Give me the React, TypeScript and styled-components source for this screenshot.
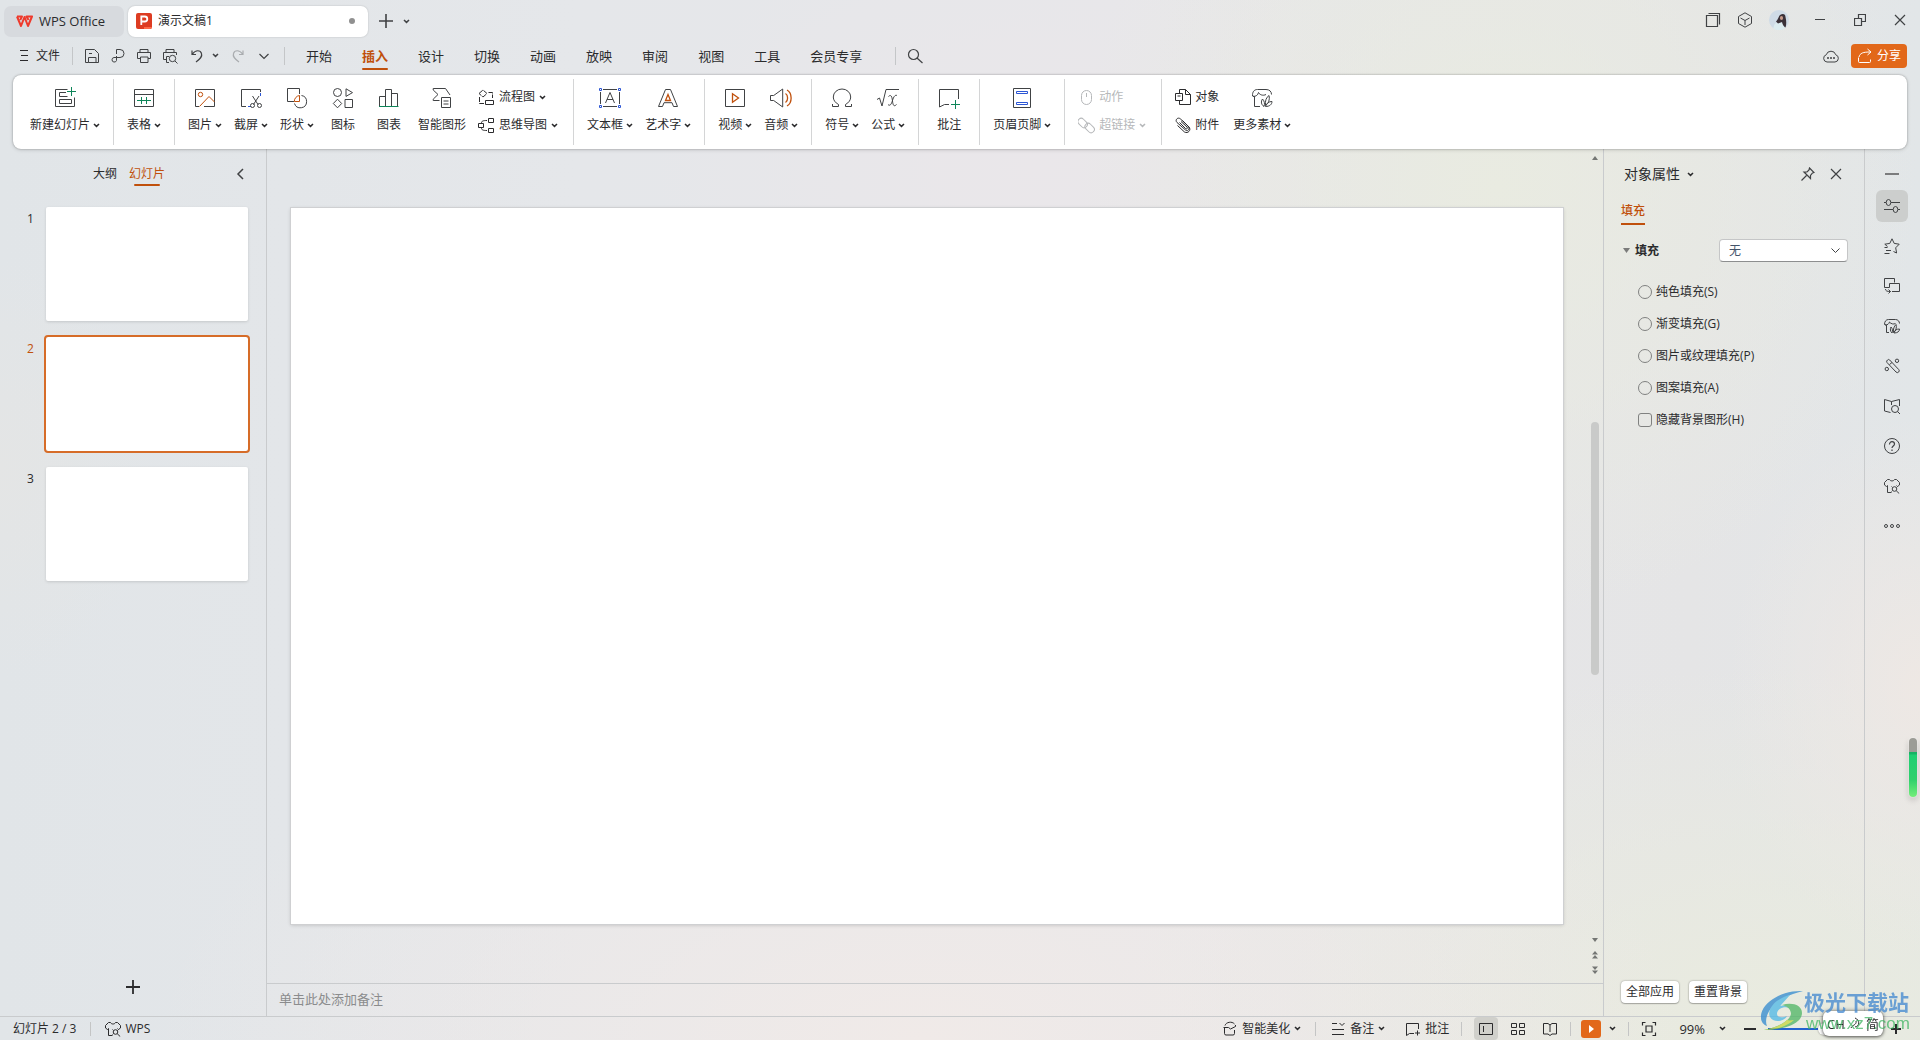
import React, { useState } from "react";
import styled, { createGlobalStyle, css } from "styled-components";

const c = {
  ink: "#2b2b2d",
  soft: "#404244",
  accent: "#c0500c",
  orange: "#e2681a",
  green: "#0e8559",
  blue: "#2b55d4",
  line: "#c9cbcd",
  rule: "#d4d5d6",
};

const Global = createGlobalStyle`
  *, *::before, *::after { box-sizing: border-box; }
  html, body { margin: 0; height: 100%; overflow: hidden; }
  body, button, input, select {
    font-family: "Open Sans", "Noto Sans CJK SC", sans-serif;
    font-size: 12px;
    line-height: 16px;
    color: ${c.ink};
  }
  h2, ol, ul { margin: 0; padding: 0; list-style: none; }
`;

/* ---------- icons ---------- */

const Glyph = styled.svg`
  display: block;
  flex: none;
  fill: none;
  stroke: currentColor;
  stroke-width: 1;
`;

type IconProps = { size?: number; children: React.ReactNode };
const Icon = ({ size = 16, children }: IconProps) => (
  <Glyph width={size} height={size} viewBox={`0 0 ${size} ${size}`} aria-hidden="true">
    {children}
  </Glyph>
);

const Chevron = () => (
  <Glyph width="7" height="5" viewBox="0 0 7 5" aria-hidden="true">
    <path d="M1 1l2.5 2.4L6 1" strokeWidth="1.5" />
  </Glyph>
);

const big: Record<string, React.ReactNode> = {
  newSlide: (
    <>
      <path d="M14.5 3.5h-12v17h19v-9" />
      <path d="M13 6.5H6.5v4h8M6.5 13.5h12v4h-12z" />
      <path d="M18.5 1v9M14 5.500h9" stroke={c.green} />
    </>
  ),
  table: (
    <>
      <path d="M2.5 3.5h19v17h-19zM2.5 8.5h19" />
      <path d="M5 14.5h14M9.5 11v7M14.5 11v7" stroke={c.green} />
    </>
  ),
  picture: (
    <>
      <path d="M6 20.5H2.5v-17h19v17H11" />
      <path d="M6.5 20.5L16 10.5l5.5 5.5" stroke={c.accent} />
      <circle cx="7.5" cy="8.5" r="2.2" stroke={c.accent} />
    </>
  ),
  screenshot: (
    <>
      <path d="M7 20.5H2.5v-17h19V6" />
      <path d="M21.5 7v3M9 20.5h3" stroke={c.blue} />
      <path d="M13.5 10l5.5 8.5M20 10l-5.500 8.5" />
      <circle cx="13.5" cy="19.5" r="2" />
      <circle cx="20.5" cy="19.5" r="2" />
    </>
  ),
  shapes: (
    <>
      <path d="M9 15.500H2.5v-13h12V8" />
      <path d="M9.500 17.500a6.200 6.200 0 1 0 7-8" />
      <path d="M14.5 9.500v6H9.300a6 6 0 0 1 5.200-6z" stroke={c.accent} />
    </>
  ),
  iconSet: (
    <>
      <circle cx="6.500" cy="6.500" r="4" />
      <path d="M15 2.800l6.500 3.800L15 10.400z" />
      <path d="M6.500 13.200l4.200 4.300-4.200 4.300-4.200-4.300z" />
      <path d="M14 13.500h7.500v8H14z" />
    </>
  ),
  chart: (
    <>
      <path d="M2.5 20v-9.500h6V20M8.500 11V3.500h6V20M14.500 7.500h6V20" />
      <path d="M2 20.500h19.500" stroke={c.green} />
    </>
  ),
  smartArt: (
    <>
      <path d="M9.500 14.500H3.200v-1.300L8 8.500 3.200 4V2.500h12.300l4.500 6.500" />
      <path d="M11.500 11.500h9v10h-9zM13.500 15h5M13.500 18h5" />
    </>
  ),
  textBox: (
    <>
      <path d="M5 3.500h14M5 20.500h14M2.500 6v12M21.500 6v12" />
      <path d="M7.500 17L12 6.500 16.500 17M9 13.500h6" />
      <path d="M1.500 2.500h2v2h-2zM20.500 2.500h2v2h-2zM1.500 19.500h2v2h-2zM20.500 19.500h2v2h-2z" stroke={c.blue} />
    </>
  ),
  wordArt: (
    <>
      <path d="M2.500 20.500L9.500 3.500h5l7 17h-4l-1.500-3.800H8L6.500 20.500z" />
      <path d="M12 8.500l-2.500 6h5z" stroke={c.accent} strokeWidth="1.300" />
    </>
  ),
  video: (
    <>
      <path d="M2.500 3.500h19v17h-19z" />
      <path d="M9.500 7.800l6 4.200-6 4.200z" stroke={c.accent} strokeWidth="1.300" />
    </>
  ),
  audio: (
    <>
      <path d="M1.500 9.500h3.200l9-6.500v18l-9-6.500H1.500z" />
      <path d="M16.500 7.500c2.800 1.500 2.800 7.500 0 9M18 4c5.500 3 5.500 13 0 16" stroke={c.accent} strokeWidth="1.300" />
    </>
  ),
  symbol: <path d="M2.500 18v2.500h6v-2C5 16.500 3.300 14 3.300 11a8.700 8 0 0 1 17.400 0c0 3-1.700 5.500-5.200 7.500v2h6V18" />,
  formula: (
    <>
      <path d="M1 13.500l2.500-1.500 2.500 8L10 3.500h13" />
      <path d="M12.500 10.500c2.500-2.500 3.500 0 4 4.500s1.500 6 4 3.500M21 9.500c-2-1-3.500 1.500-4.500 5s-2.500 6-4.500 4" />
    </>
  ),
  comment: (
    <>
      <path d="M12 18.500H7.500L2.500 21V3.500h19V13" />
      <path d="M18.500 14v9M14 18.500h9" stroke={c.green} />
    </>
  ),
  headerFooter: (
    <>
      <path d="M3.500 2.500h17v19h-17z" />
      <path d="M6.500 5.500h11v2h-11zM6.500 16.500h11v2h-11z" stroke={c.blue} />
    </>
  ),
  material: (
    <>
      <path d="M10 20.500H4.500v-10L2.500 10C2.300 6 4 3.500 7.500 3.500h8.500c3.500 0 5.500 2 5.500 5M3 10.500c3 0 5-1.500 5.500-4C10 9 13 10 16 8.500" />
      <path d="M14 20.500c-3-2-3.200-5-1.500-7.500 2 2 2.500 5 1.500 7.500zM15.500 19.500c-.5-4.500.5-8 3.500-10 1 4-.5 8-3.500 10zM15.500 20.500c1-3.500 3.500-5 6.500-5 0 3-2.500 5-6.500 5z" />
    </>
  ),
};

/* ---------- frame ---------- */

const Window = styled.div`
  display: flex;
  flex-direction: column;
  height: 100vh;
  overflow: hidden;
  background:
    radial-gradient(ellipse 40% 36% at 48% 100%, #f0eae8 0%, #f0eae800 100%),
    radial-gradient(ellipse 10% 26% at 100% 66%, #eee8e4 0%, #eee8e400 100%),
    radial-gradient(ellipse 34% 34% at 92% 98%, #e9ebdf 0%, #e9ebdf00 100%),
    radial-gradient(ellipse 22% 42% at 78% 18%, #e9ebe1 0%, #e9ebe100 100%),
    radial-gradient(ellipse 20% 24% at 54% 16%, #eae7ea 0%, #eae7ea00 100%),
    radial-gradient(ellipse 8% 20% at 0% 45%, #e4e5e5 0%, #e4e5e500 100%),
    linear-gradient(90deg, #e1e5e8 0%, #e5e7ea 30%, #e7e7ea 60%, #e5e5e6 88%, #e2e6e8 100%);
`;

const BareButton = styled.button`
  display: flex;
  align-items: center;
  justify-content: center;
  padding: 0;
  border: 0;
  background: none;
  white-space: nowrap;
  cursor: pointer;
`;

const IconButton = styled(BareButton)<{ $w?: number; $muted?: boolean }>`
  width: ${(p) => p.$w ?? 26}px;
  height: 24px;
  color: ${(p) => (p.$muted ? "#a9acaf" : c.soft)};
`;

const Spacer = styled.div`
  flex: 1;
`;

const TitleBar = styled.header`
  display: flex;
  align-items: center;
  height: 38px;
  padding: 4px 0 0 4px;
`;

const Tab = styled(BareButton)<{ $active?: boolean }>`
  justify-content: flex-start;
  gap: 6px;
  width: ${(p) => (p.$active ? 240 : 120)}px;
  height: 31px;
  margin-right: 4px;
  padding: 0 ${(p) => (p.$active ? 13 : 8)}px 0 ${(p) => (p.$active ? 8 : 12)}px;
  border-radius: 7px;
  background: ${(p) => (p.$active ? "#fff" : "#d7dade")};
  box-shadow: ${(p) => (p.$active ? "0 0 2px #0003" : "none")};
  font-size: ${(p) => (p.$active ? 12 : 13)}px;
`;

const UnsavedDot = styled.span`
  width: 6px;
  height: 6px;
  margin-left: auto;
  border-radius: 50%;
  background: #909090;
`;

const WindowButtons = styled.div`
  display: flex;
  align-items: center;
  margin-bottom: 2px;
`;

const AvatarButton = styled(BareButton)`
  margin: 0 11px 0 8px;
`;

const MenuBar = styled.nav`
  display: flex;
  align-items: center;
  height: 37px;
  padding: 0 13px 2px 16px;
`;

const FileButton = styled(BareButton)`
  gap: 6px;
  margin-right: 12px;
`;

const MenuRule = styled.span<{ $l?: number; $r?: number }>`
  width: 1px;
  height: 18px;
  margin: 0 ${(p) => p.$r ?? 6}px 0 ${(p) => p.$l ?? 0}px;
  background: #c4c6c8;
`;

const MenuTab = styled(BareButton)<{ $active?: boolean }>`
  position: relative;
  height: 28px;
  padding: 0 15px;
  font-size: 13px;
  font-weight: ${(p) => (p.$active ? 700 : 400)};
  color: ${(p) => (p.$active ? c.accent : c.ink)};
  ${(p) =>
    p.$active &&
    css`
      &::after {
        content: "";
        position: absolute;
        inset: auto 15px 0;
        height: 2px;
        border-radius: 1px;
        background: ${c.accent};
      }
    `}
`;

const ShareButton = styled(BareButton)`
  gap: 4px;
  height: 24px;
  margin-left: 8px;
  padding: 0 6px;
  border-radius: 4px;
  background: ${c.orange};
  color: #fff;
`;

/* ---------- ribbon ---------- */

const Ribbon = styled.section`
  position: relative;
  z-index: 1;
  display: flex;
  height: 74px;
  margin: 0 13px;
  padding: 4px 4px;
  border-radius: 8px;
  background: #fff;
  box-shadow: 0 0 2px #0005, 0 1px 4px #0002;
`;

const Group = styled.div`
  display: flex;
  padding: 0 7px;
  & + & {
    border-left: 1px solid ${c.rule};
  }
`;

const BigButton = styled(BareButton)`
  flex-direction: column;
  justify-content: flex-start;
  gap: 7px;
  min-width: 46px;
  padding: 7px 6px 0;
  color: ${c.soft};
`;

const Caption = styled.span`
  display: flex;
  align-items: center;
  gap: 3px;
  color: ${c.ink};
`;

const Stack = styled.div`
  display: flex;
  flex-direction: column;
  padding: 4px 8px 0 6px;
`;

const SmallButton = styled(BareButton)`
  justify-content: flex-start;
  gap: 4px;
  height: 28px;
  color: ${c.ink};
  &:disabled {
    color: #b6b8ba;
    cursor: default;
  }
`;

/* ---------- workspace ---------- */

const Workspace = styled.div`
  display: flex;
  flex: 1;
  min-height: 0;
`;

const SlidePanel = styled.aside`
  display: flex;
  flex-direction: column;
  width: 267px;
  border-right: 1px solid ${c.line};
`;

const PanelTabs = styled.div`
  display: flex;
  align-items: center;
  height: 50px;
  padding: 0 13px 0 93px;
  gap: 12px;
`;

const PanelTab = styled(BareButton)<{ $active?: boolean }>`
  position: relative;
  height: 24px;
  color: ${(p) => (p.$active ? c.accent : c.ink)};
  ${(p) =>
    p.$active &&
    css`
      &::after {
        content: "";
        position: absolute;
        inset: auto 5px 0;
        height: 2px;
        border-radius: 1px;
        background: ${c.accent};
      }
    `}
`;

const Thumbs = styled.ol`
  display: flex;
  flex-direction: column;
  flex: 1;
  gap: 12px;
  padding: 6px 16px 0 27px;
`;

const ThumbRow = styled.li<{ $active?: boolean }>`
  display: flex;
  gap: 11px;
  color: ${(p) => (p.$active ? c.accent : c.ink)};
`;

const ThumbNumber = styled.span`
  width: 6px;
  padding-top: 6px;
`;

const Thumb = styled.button<{ $active?: boolean }>`
  flex: 1;
  height: 118px;
  padding: 0;
  border: 2px solid ${(p) => (p.$active ? "#d66c28" : "transparent")};
  border-radius: 4px;
  background: #fff padding-box;
  &::before {
    content: "";
    display: block;
    height: 100%;
    border-radius: 2px;
    box-shadow: ${(p) => (p.$active ? "none" : "0 1px 3px #0002")};
  }
`;

const AddSlide = styled(BareButton)`
  height: 24px;
  margin-bottom: 17px;
`;

const Center = styled.main`
  display: flex;
  flex-direction: column;
  flex: 1;
  min-width: 0;
`;

const Stage = styled.div`
  display: flex;
  flex: 1;
  min-height: 0;
  padding-left: 24px;
`;

const SlideArea = styled.div`
  display: flex;
  flex: 1;
  align-items: center;
`;

const Slide = styled.div`
  width: 100%;
  aspect-ratio: 16 / 9;
  background: #fff;
  box-shadow: 0 0 0 1px #cfd0d2, 0 1px 4px #0003;
`;

const ScrollBar = styled.div`
  display: flex;
  flex-direction: column;
  align-items: center;
  width: 16px;
  margin-left: 24px;
  padding: 1px 0 6px;
`;

const ScrollTrack = styled.div`
  display: flex;
  flex: 1;
  align-items: center;
`;

const ScrollThumb = styled.div`
  width: 8px;
  height: 33%;
  border-radius: 4px;
  background: #c9cac9;
`;

const ScrollButton = styled(BareButton)`
  width: 16px;
  height: 15px;
  color: #747674;
`;

const Notes = styled.input`
  height: 33px;
  padding: 0 12px 3px;
  border: 0;
  border-top: 1px solid ${c.line};
  background: none;
  font-size: 13px;
  &::placeholder {
    color: #8b8c8d;
    opacity: 1;
  }
`;

const Properties = styled.aside`
  display: flex;
  flex-direction: column;
  width: 262px;
  padding: 0 16px 13px 17px;
  border: 1px solid ${c.line};
  border-width: 0 1px;
`;

const PropertyHead = styled.div`
  display: flex;
  align-items: center;
  height: 50px;
  margin-right: -2px;
`;

const PropertyTitle = styled(BareButton)`
  gap: 7px;
  padding-left: 3px;
  font-size: 14px;
`;

const PropertyTab = styled(BareButton)`
  align-self: flex-start;
  height: 26px;
  border-bottom: 2px solid ${c.accent};
  color: ${c.accent};
  font-weight: 500;
`;

const FillRow = styled.div`
  display: flex;
  align-items: center;
  justify-content: space-between;
  margin: 14px 0;
`;

const SectionToggle = styled(BareButton)`
  gap: 5px;
  padding-left: 2px;
  font-weight: 700;
`;

const SelectBox = styled.label`
  display: flex;
  align-items: center;
  width: 129px;
  height: 23px;
  padding-right: 7px;
  border: 1px solid #c5c6c7;
  border-bottom-color: #8d8e8f;
  border-radius: 4px;
  background: #fff;
  color: ${c.soft};
`;

const Select = styled.select`
  flex: 1;
  appearance: none;
  padding: 0 9px;
  border: 0;
  outline: 0;
  background: none;
  color: #44546a;
`;

const Option = styled.label`
  display: flex;
  align-items: center;
  gap: 4px;
  height: 32px;
  padding-left: 17px;
`;

const Tick = styled.input`
  appearance: none;
  width: 14px;
  height: 14px;
  margin: 0;
  border: 1px solid #808180;
  border-radius: ${(p) => (p.type === "radio" ? "50%" : "3px")};
  &:checked {
    border: 4px solid ${c.orange};
    background: #fff;
  }
`;

const PropertyActions = styled.div`
  display: flex;
  gap: 10px;
  margin-top: auto;
`;

const ActionButton = styled(BareButton)`
  width: 58px;
  height: 22px;
  border-radius: 4px;
  background: #fff;
  box-shadow: 0 0 2px #0006, 0 1px 1px #0003;
`;

const SideRail = styled.aside`
  display: flex;
  flex-direction: column;
  align-items: center;
  gap: 8px;
  width: 55px;
  padding: 17px 1px 0 0;
`;

const RailDash = styled(BareButton)`
  width: 32px;
  height: 16px;
  color: #7b7c7d;
`;

const RailButton = styled(BareButton)<{ $active?: boolean }>`
  width: 32px;
  height: 32px;
  border-radius: 6px;
  background: ${(p) => (p.$active ? "#cccecd" : "none")};
  color: ${c.soft};
`;

/* ---------- status bar ---------- */

const StatusBar = styled.footer`
  display: flex;
  align-items: center;
  height: 24px;
  padding: 0 16px 0 13px;
  border-top: 1px solid ${c.line};
`;

const StatusRule = styled.span<{ $gap?: number }>`
  width: 1px;
  height: 14px;
  margin: 0 ${(p) => p.$gap ?? 8}px;
  background: #c4c5c5;
`;

const StatusButton = styled(BareButton)`
  gap: 4px;
  height: 23px;
  & + & {
    margin-left: 20px;
  }
`;

const ViewButtons = styled.div`
  display: flex;
  gap: 8px;
`;

const ViewButton = styled(BareButton)<{ $active?: boolean }>`
  width: 24px;
  height: 23px;
  border-radius: 4px;
  background: ${(p) => (p.$active ? "#d0d0cb" : "none")};
`;

const PlayButton = styled(BareButton)`
  width: 20px;
  height: 18px;
  margin: 0 8px 0 2px;
  border-radius: 3px;
  background: ${c.orange};
  color: #fff;
`;

const ZoomValue = styled(BareButton)`
  gap: 14px;
  margin: 0 16px 0 22px;
  font-size: 13px;
`;

const ZoomRange = styled.input`
  appearance: none;
  width: 112px;
  height: 16px;
  margin: 0 8px 0 10px;
  background: none;
  &::-webkit-slider-runnable-track {
    height: 2px;
    background: linear-gradient(90deg, #2463cf 50%, #b9babb 50%);
  }
  &::-webkit-slider-thumb {
    appearance: none;
    width: 12px;
    height: 12px;
    margin-top: -5px;
    border-radius: 50%;
    background: #fff;
    box-shadow: 0 0 2px #0006;
  }
`;

/* ---------- floating desktop overlays ---------- */

const Meter = styled.div`
  position: fixed;
  right: 3px;
  bottom: 243px;
  width: 8px;
  height: 59px;
  border-radius: 4px;
  background: linear-gradient(#9c9c96 0 14px, #16b364 14px 16px, #1fcf72 17px, #2fd06c 70%, #74ee7a);
  box-shadow: 0 0 2px #fff, 0 3px 6px #0003;
`;

const ImeBadge = styled.div`
  position: fixed;
  right: 37px;
  bottom: 4px;
  display: flex;
  align-items: center;
  justify-content: center;
  gap: 4px;
  width: 60px;
  height: 25px;
  border-radius: 6px;
  background: #fff;
  box-shadow: 0 0 4px #0008, 0 1px 3px #0006;
  font-size: 13px;
`;

const Watermark = styled.div`
  position: fixed;
  right: 10px;
  bottom: 7px;
  display: flex;
  align-items: center;
  opacity: 0.75;
  pointer-events: none;
`;

const WatermarkText = styled.div`
  display: flex;
  flex-direction: column;
  font-size: 21px;
  font-weight: 700;
  line-height: 26px;
  color: #3f86cf;
`;

const WatermarkSite = styled.span`
  padding-left: 2px;
  font-family: "Liberation Sans", sans-serif;
  font-size: 17px;
  font-weight: 400;
  line-height: 18px;
  color: #3fb562;
`;

/* ---------- pieces ---------- */

type BigProps = { icon: string; text: string; menu?: boolean };
const Big = ({ icon, text, menu }: BigProps) => (
  <BigButton>
    <Icon size={24}>{big[icon]}</Icon>
    <Caption>
      {text}
      {menu && <Chevron />}
    </Caption>
  </BigButton>
);

const shirt = (
  <>
    <path d="M7.500 14.500h-4V7.500L2.500 8.500.5 7V4.500l3-3h2c.8 2 4.200 2 5 0h2l3 3V7l-2 1.500-1-1" />
    <circle cx="10.500" cy="11" r="2.300" />
    <path d="M12.200 12.700l3 2.800M7.500 13.500l1-1M13.500 8.500l-1 1M7.500 8.500l1 1" />
  </>
);

const railIcons: [string, React.ReactNode][] = [
  ["对象属性", <><path d="M0 4.500h2M7 4.500h9M0 11.500h9M14 11.500h2" /><ellipse cx="4.500" cy="4.500" rx="2.300" ry="3" /><ellipse cx="11.500" cy="11.500" rx="2.300" ry="3" /></>],
  ["收藏", <path d="M3.500 8.500L.8 6.200l5-.8L8 .8l2.200 4.600 5 .8-3.500 3.600.9 5.200L9.500 13.500M.5 9.500h3M2 12.500h5M.5 15.500h5" />],
  ["切换", <><path d="M5.500 9.500h-5v-9h10v4" /><path d="M5.500 5.500h10v8H8M5.500 5.500v4M1.500 11c0 2 1.500 2.500 5 2.500M4.500 11.500l2 2-2 2" /></>],
  ["素材", <><path d="M5 14.500H2.500V7L.5 6.500C.5 3.500 2 1.500 4.500 1.500h7c2.500 0 4 2 4 4M1 7c2.500 0 4-1 4.500-3C7 6 9.500 6.500 11.500 5.500" /><path d="M8 15c-2-2-2-4-1-6 1.500 1.500 2 4 1 6zM9.500 14.500c-.5-3.500.5-6 2.500-8 1 3 0 6-2.500 8zM10 15c1-3 2.500-4 5.500-4 0 2.500-2 4-5.500 4z" /></>],
  ["美化", <><path d="M3.500 2a1.500 1.500 0 0 1 2.200 0l9 9.500a1.500 1.500 0 0 1-2.700 2.500L3 4.500A1.800 1.800 0 0 1 3.500 2zM5.500 6.500l2.500-2" /><circle cx="13" cy="2.800" r="1.700" /><circle cx="2.800" cy="11" r="1.700" /></>],
  ["阅读", <><path d="M6.500 14.500L.5 13V1.500l7 2 8-2V8M7.500 3.500V7" /><circle cx="11" cy="11" r="3.500" /><path d="M13.500 13.500l2.500 2.500" /></>],
  ["帮助", <><circle cx="8" cy="8" r="7.500" /><path d="M5.500 6.500c0-4 5-3.500 5-.5 0 2-2.500 2-2.500 4M8 11.500v1.500" strokeWidth="1.200" /></>],
  ["皮肤", shirt],
  ["更多", <><circle cx="2" cy="8" r="1.500" /><circle cx="8" cy="8" r="1.500" /><circle cx="14" cy="8" r="1.500" /></>],
];

const tabs = ["开始", "插入", "设计", "切换", "动画", "放映", "审阅", "视图", "工具", "会员专享"];
const fills = ["纯色填充(S)", "渐变填充(G)", "图片或纹理填充(P)", "图案填充(A)"];

const TopBar = () => (
  <TitleBar>
    <Tab>
      <Glyph width="17" height="13" viewBox="0 0 17 13" aria-hidden="true">
        <path d="M1 1.500h5L4.200 5M1 1.500l4 9.500L8.500 2l3.500 9 4-9.500h-5.500L12.500 5" stroke="#ee3a2c" strokeWidth="2" strokeLinejoin="round" />
      </Glyph>
      WPS Office
    </Tab>
    <Tab $active>
      <Glyph width="16" height="16" viewBox="0 0 16 16" aria-hidden="true">
        <rect width="16" height="16" rx="2" fill="#dd3c22" stroke="none" />
        <path d="M8 14h8a2 2 0 0 1-2 2H8z" fill="#ff6a48" stroke="none" />
        <path d="M5.300 12V3.500h3.500a2.500 2.500 0 0 1 0 5H5.300" stroke="#fff" strokeWidth="1.800" />
      </Glyph>
      演示文稿1
      <UnsavedDot />
    </Tab>
    <IconButton $w={28} aria-label="新建">
      <Icon size={14}><path d="M7 0v14M0 7h14" strokeWidth="1.600" /></Icon>
    </IconButton>
    <IconButton $w={12} aria-label="标签列表"><Chevron /></IconButton>
    <Spacer />
    <WindowButtons>
      <IconButton $w={32} aria-label="窗口">
        <Icon><path d="M1.500 3.500h11v11h-11zM3.500 1.500h11v11" strokeWidth="1.200" /></Icon>
      </IconButton>
      <IconButton $w={32} aria-label="应用">
        <Icon><path d="M8 .8l6.500 3.700v7L8 15.200l-6.500-3.700v-7zM3.500 6L8 8.500 12.500 6M8 8.500V13" /></Icon>
      </IconButton>
      <AvatarButton aria-label="账户">
        <Glyph width="20" height="20" viewBox="0 0 20 20" aria-hidden="true">
          <circle cx="10" cy="10" r="10" fill="#cfdbe6" stroke="none" />
          <path d="M4.500 18.400c0-4 2.500-6.400 5.500-6.400s6 2 5 6.700A10 10 0 0 1 4.500 18.400z" fill="#dcecf0" stroke="none" />
          <path d="M11 5c3-2 5.500-1 5.500 2 1 4 1 8 0 10.500-2-1-3-3-3.500-5.500l-4 1.500-2-2c2-1.500 2.500-5 4-6.500z" fill="#3a3138" stroke="none" />
          <ellipse cx="12.500" cy="8" rx="1.600" ry="2" fill="#c79b8c" stroke="none" />
        </Glyph>
      </AvatarButton>
      <IconButton $w={40} aria-label="最小化"><Icon size={12}><path d="M1 5.500h10" /></Icon></IconButton>
      <IconButton $w={40} aria-label="还原"><Icon size={12}><path d="M.5 4.500h7v7h-7zM4.500 4V.5h7v7H8" strokeWidth="1.200" /></Icon></IconButton>
      <IconButton $w={40} aria-label="关闭"><Icon size={12}><path d="M1 1l10 10M11 1L1 11" strokeWidth="1.200" /></Icon></IconButton>
    </WindowButtons>
  </TitleBar>
);

const Menu = () => (
  <MenuBar>
    <FileButton>
      <Icon size={14}><path d="M4 1.500h8M5 6.500h7M4 11.500h8" /></Icon>
      文件
    </FileButton>
    <MenuRule />
    <IconButton aria-label="保存"><Icon><path d="M1.500 1.500h9l4 4v9H12V9.500H4.500v5H1.500zM5 5.500h3M4.500 14.500H12" /></Icon></IconButton>
    <IconButton aria-label="输出为PDF"><Icon><path d="M6.500 6V1.500h3.500a4 4 0 0 1 0 8H4a2.300 2.300 0 1 0 2.500 3V8" /></Icon></IconButton>
    <IconButton aria-label="打印"><Icon><path d="M4 10.500H1.500v-6h13v6H12M4 4.500v-3h8v3M4.500 9h7.500v5.500H4.500z" /></Icon></IconButton>
    <IconButton aria-label="打印预览"><Icon><path d="M4 11.500H1.500v-7h13V7M4 4.500v-3h8v3M4.500 8.500v6H7M4.500 8.500H7" /><circle cx="10.500" cy="10.500" r="3.200" /><path d="M13 13l2.500 2.500" /></Icon></IconButton>
    <IconButton $w={28} aria-label="撤销"><Icon><path d="M3 2.500v4h4M3.500 6c3-4.500 8-4 9-.5 1 3-1 5-5.500 8.500" strokeWidth="1.200" /></Icon></IconButton>
    <IconButton $w={8} aria-label="撤销列表"><Chevron /></IconButton>
    <IconButton $w={38} $muted aria-label="恢复"><Icon><path d="M13 2.500v4H9M12.500 6c-3-4.500-8-4-9-.5-1 3 1 5 5.500 8.500" strokeWidth="1.200" /></Icon></IconButton>
    <IconButton $w={14} aria-label="更多命令"><Icon size={12}><path d="M1.500 4l4.500 4.500L10.500 4" strokeWidth="1.200" /></Icon></IconButton>
    <MenuRule $l={13} />
    {tabs.map((t) => (
      <MenuTab key={t} $active={t === "插入"}>{t}</MenuTab>
    ))}
    <MenuRule $l={18} />
    <IconButton aria-label="搜索"><Icon><circle cx="6.500" cy="6.500" r="5" strokeWidth="1.200" /><path d="M10 10l5.500 5" strokeWidth="1.200" /></Icon></IconButton>
    <Spacer />
    <IconButton $w={24} aria-label="云服务">
      <Icon><path d="M4 14a3.700 3.700 0 0 1-.8-7.200 5 5 0 0 1 9.600 0A3.700 3.700 0 0 1 12 14z" /><path d="M4 10h2M7 10h2M10 10h2" strokeWidth="1.600" /></Icon>
    </IconButton>
    <ShareButton>
      <Icon><path d="M1.500 9.500v4q0 1 1 1h10q1 0 1-1v-2M2 9c1-4 4-5 11.500-5M10.500 1l3.500 3-3.500 3" /></Icon>
      分享
    </ShareButton>
  </MenuBar>
);

const RibbonBar = () => (
  <Ribbon aria-label="插入">
    <Group><Big icon="newSlide" text="新建幻灯片" menu /></Group>
    <Group><Big icon="table" text="表格" menu /></Group>
    <Group>
      <Big icon="picture" text="图片" menu />
      <Big icon="screenshot" text="截屏" menu />
      <Big icon="shapes" text="形状" menu />
      <Big icon="iconSet" text="图标" />
      <Big icon="chart" text="图表" />
      <Big icon="smartArt" text="智能图形" />
      <Stack>
        <SmallButton>
          <Icon size={17}><path d="M1 4.500l4-3.500 4 3.500-4 3.500zM10.500 3.500h4V9M1.500 8v6.500h5" strokeDasharray="5 1" /><path d="M7.500 11.500h8v4h-8z" /></Icon>
          流程图 <Chevron />
        </SmallButton>
        <SmallButton>
          <Icon size={17}><path d="M.5 6.500h5v4h-5zM10.500 1.500h5v4h-5zM10.500 11.500h5v4h-5zM3.500 6C3.500 4 5 3.500 9 3.500M3.500 11c0 2 1.500 2.500 5.500 2.500" /></Icon>
          思维导图 <Chevron />
        </SmallButton>
      </Stack>
    </Group>
    <Group>
      <Big icon="textBox" text="文本框" menu />
      <Big icon="wordArt" text="艺术字" menu />
    </Group>
    <Group>
      <Big icon="video" text="视频" menu />
      <Big icon="audio" text="音频" menu />
    </Group>
    <Group>
      <Big icon="symbol" text="符号" menu />
      <Big icon="formula" text="公式" menu />
    </Group>
    <Group><Big icon="comment" text="批注" /></Group>
    <Group><Big icon="headerFooter" text="页眉页脚" menu /></Group>
    <Group>
      <Stack>
        <SmallButton disabled>
          <Icon size={17}><rect x="3.500" y="1.500" width="10" height="14" rx="5" /><path d="M8.500 4v4" /></Icon>
          动作
        </SmallButton>
        <SmallButton disabled>
          <Icon size={17}><rect x="-.5" y="3" width="10.500" height="6.500" rx="3.200" transform="rotate(45 5 6)" /><rect x="6.500" y="8" width="10.500" height="6.500" rx="3.200" transform="rotate(45 12 11)" /></Icon>
          超链接 <Chevron />
        </SmallButton>
      </Stack>
    </Group>
    <Group>
      <Stack>
        <SmallButton>
          <Icon><path d="M4.500 4V.5h6l5 5v10h-11V12M10.500.5v5h5M.5 4.500h7v7h-7zM2.500 7h3" /></Icon>
          对象
        </SmallButton>
        <SmallButton>
          <Icon><path d="M7.500 3.500L13 9c2.500 2.500 0 6-2.500 4L2 5.500C-.5 3 3-.5 5.500 2l8.500 8c2.500 3-1 7-4.500 5L2.500 8.500M4.500 5.500l6 6c1.500 1.200 2.500-.5 1.500-1.500L6 4.500" /></Icon>
          附件
        </SmallButton>
      </Stack>
      <Big icon="material" text="更多素材" menu />
    </Group>
  </Ribbon>
);

const Slides = () => {
  const [current, setCurrent] = useState(2);
  return (
    <SlidePanel>
      <PanelTabs>
        <PanelTab>大纲</PanelTab>
        <PanelTab $active>幻灯片</PanelTab>
        <Spacer />
        <IconButton aria-label="收起"><Icon size={12}><path d="M9 1L4 6l5 5" strokeWidth="1.500" /></Icon></IconButton>
      </PanelTabs>
      <Thumbs>
        {[1, 2, 3].map((n) => (
          <ThumbRow key={n} $active={n === current}>
            <ThumbNumber>{n}</ThumbNumber>
            <Thumb $active={n === current} aria-label={`幻灯片 ${n}`} onClick={() => setCurrent(n)} />
          </ThumbRow>
        ))}
      </Thumbs>
      <AddSlide aria-label="新建幻灯片">
        <Icon size={14}><path d="M7 0v14M0 7h14" strokeWidth="1.800" /></Icon>
      </AddSlide>
    </SlidePanel>
  );
};

const Scroll = () => (
  <ScrollBar>
    <ScrollButton aria-label="向上滚动"><Icon size={8}><path d="M4 2l3 4H1z" fill="currentColor" stroke="none" /></Icon></ScrollButton>
    <ScrollTrack><ScrollThumb /></ScrollTrack>
    <ScrollButton aria-label="向下滚动"><Icon size={8}><path d="M1 2h6L4 6z" fill="currentColor" stroke="none" /></Icon></ScrollButton>
    <ScrollButton aria-label="上一张"><Icon size={8}><path d="M4 0l3 3.500H1zM4 4l3 3.500H1z" fill="currentColor" stroke="none" /></Icon></ScrollButton>
    <ScrollButton aria-label="下一张"><Icon size={8}><path d="M1 .5h6L4 4zM1 4.500h6L4 8z" fill="currentColor" stroke="none" /></Icon></ScrollButton>
  </ScrollBar>
);

const PropertyPanel = () => (
  <Properties>
    <PropertyHead>
      <PropertyTitle>对象属性 <Chevron /></PropertyTitle>
      <Spacer />
      <IconButton $w={28} aria-label="固定"><Icon size={14}><path d="M8.500 1l4.500 4.500-1.500.5-2 2.500v3L3 5h3l2-2zM5.500 8.500L.5 13.500" strokeWidth="1.200" /></Icon></IconButton>
      <IconButton $w={28} aria-label="关闭"><Icon size={12}><path d="M1 1l10 10M11 1L1 11" strokeWidth="1.200" /></Icon></IconButton>
    </PropertyHead>
    <PropertyTab>填充</PropertyTab>
    <FillRow>
      <SectionToggle><Icon size={7}><path d="M0 1h7L3.500 6z" fill="#7a7b7a" stroke="none" /></Icon>填充</SectionToggle>
      <SelectBox>
        <Select aria-label="填充" defaultValue="无"><option>无</option></Select>
        <Icon size={9}><path d="M.5 2.500l4 4 4-4" /></Icon>
      </SelectBox>
    </FillRow>
    {fills.map((f) => (
      <Option key={f}><Tick type="radio" name="fill" />{f}</Option>
    ))}
    <Option><Tick type="checkbox" />隐藏背景图形(H)</Option>
    <PropertyActions>
      <ActionButton>全部应用</ActionButton>
      <ActionButton>重置背景</ActionButton>
    </PropertyActions>
  </Properties>
);

const Status = () => (
  <StatusBar>
    <span>幻灯片 2 / 3</span>
    <StatusRule $gap={14} />
    <StatusButton><Icon size={16}>{shirt}</Icon>WPS</StatusButton>
    <Spacer />
    <StatusButton>
      <Icon><path d="M2.500 7v5.500q0 1.500 1.500 1.500h7q1.500 0 1.500-1.500V9M1.500 6.500h5l2 1.500 5-2.500V4M3 4.500C4 1 10 0 12.500 3" /></Icon>
      智能美化 <Chevron />
    </StatusButton>
    <StatusRule $gap={14} />
    <StatusButton>
      <Icon><path d="M2 2.500h5M2 8.500h12M2 13.500h12M9.500 2L12 4.500 14.500 2" /></Icon>
      备注 <Chevron />
    </StatusButton>
    <StatusButton>
      <Icon><path d="M9 12.500H4.500l-3 2V2.500h12V8M12.500 9.500v5M10 12h5" /></Icon>
      批注
    </StatusButton>
    <StatusRule $gap={12} />
    <ViewButtons>
      <ViewButton $active aria-label="普通视图"><Icon><path d="M1.500 2.500h13v11h-13zM5.500 5v6" /></Icon></ViewButton>
      <ViewButton aria-label="幻灯片浏览"><Icon><path d="M1.500 2.500h5v4h-5zM9.500 2.500h5v4h-5zM1.500 9.500h5v4h-5zM9.500 9.500h5v4h-5z" /></Icon></ViewButton>
      <ViewButton aria-label="阅读视图"><Icon><path d="M8 14.500L6 13H1.500V2.500H6L8 4l2-1.500h4.500V13H10zM8 4v7" /></Icon></ViewButton>
    </ViewButtons>
    <StatusRule />
    <PlayButton aria-label="放映"><Icon size={8}><path d="M2 0l5 4-5 4z" fill="currentColor" stroke="none" /></Icon></PlayButton>
    <StatusButton aria-label="放映选项"><Chevron /></StatusButton>
    <StatusRule $gap={12} />
    <StatusButton aria-label="最佳显示比例"><Icon><path d="M1.500 4.500v-3h3M11.500 1.500h3v3M14.500 11.500v3h-3M4.500 14.500h-3v-3M5 5h6v6H5z" strokeWidth="1.200" /></Icon></StatusButton>
    <ZoomValue>99% <Chevron /></ZoomValue>
    <BareButton aria-label="缩小"><Icon><path d="M2 8h12" strokeWidth="2" /></Icon></BareButton>
    <ZoomRange type="range" aria-label="缩放" min={0} max={100} defaultValue={50} />
    <BareButton aria-label="放大"><Icon><path d="M3 8h10M8 3v10" strokeWidth="2" /></Icon></BareButton>
  </StatusBar>
);

export default function App() {
  return (
    <>
      <Global />
      <Window>
        <TopBar />
        <Menu />
        <RibbonBar />
        <Workspace>
          <Slides />
          <Center>
            <Stage>
              <SlideArea><Slide /></SlideArea>
              <Scroll />
            </Stage>
            <Notes aria-label="备注" placeholder="单击此处添加备注" />
          </Center>
          <PropertyPanel />
          <SideRail>
            <RailDash aria-label="折叠"><Icon size={14}><path d="M0 7h14" strokeWidth="2" /></Icon></RailDash>
            {railIcons.map(([name, art], i) => (
              <RailButton key={name} $active={i === 0} aria-label={name}><Icon>{art}</Icon></RailButton>
            ))}
          </SideRail>
        </Workspace>
        <Status />
      </Window>
      <Meter />
      <ImeBadge>
        CH
        <Icon size={13}><path d="M6 1c5 2 5 8 0 9M2 11c1-3 6-3 5-7" /></Icon>
        简
      </ImeBadge>
      <Watermark>
        <Glyph width="44" height="42" viewBox="0 0 44 42" aria-hidden="true">
          <path d="M43 1C20 0 0 14 1 28c0 4 3 7 6 8C3 24 14 8 43 1z" fill="#2f88cf" stroke="none" />
          <path d="M30 5C14 9 7 20 10 27c3 6 14 5 17-1-4 2-10 2-10-2 0-5 7-8 12-6-5-5-15-2-16 6" fill="#4cb7e6" stroke="none" />
          <path d="M22 15c10-3 20 0 20 8 0 10-16 17-38 17 14-3 26-9 27-16 0-5-4-8-9-9z" fill="#4db463" stroke="none" />
          <path d="M4 40c10-2 18-5 23-10 3 1 5 0 7 0-7 6-17 10-30 10z" fill="#c6d63c" stroke="none" />
        </Glyph>
        <WatermarkText>
          极光下载站
          <WatermarkSite>www.xz7.com</WatermarkSite>
        </WatermarkText>
      </Watermark>
    </>
  );
}
